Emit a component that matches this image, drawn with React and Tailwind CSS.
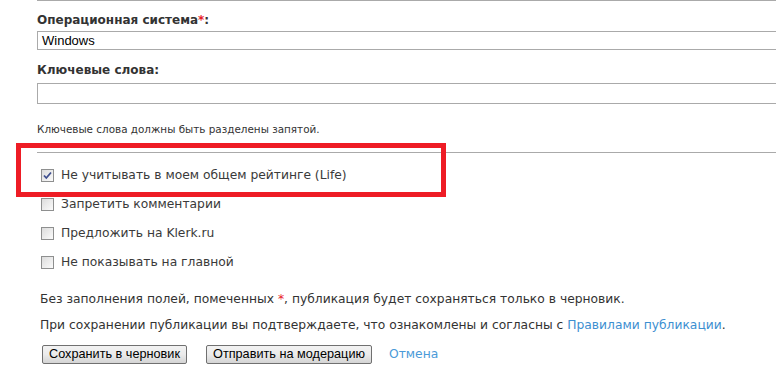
const Box = ({ checked }) => (
  <span className="w-[13px] h-[13px] border border-[#8e8f8f] bg-gradient-to-br from-[#dcdcdc] to-[#fbfbfb] flex items-center justify-center shrink-0">
    {checked && (
      <svg viewBox="0 0 11 11" className="w-[11px] h-[11px]">
        <path d="M2 5.5 L4.3 8 L9 2.5" fill="none" stroke="#3f4f8f" strokeWidth="1.8" />
      </svg>
    )}
  </span>
)

const Option = ({ label, checked }) => (
  <div className="h-[29px] flex items-center gap-[7px] pl-[4px]">
    <Box checked={checked} />
    <span className="text-[12.3px] text-[#3a3a3a]">{label}</span>
  </div>
)

const Btn = ({ children }) => (
  <button className="h-[19px] px-[6px] whitespace-nowrap rounded-[2px] border border-[#707070] bg-gradient-to-b from-[#f2f2f2] via-[#ebebeb] to-[#d4d4d4] text-[12.7px] leading-[17px] text-black font-['Liberation_Sans',sans-serif]">
    {children}
  </button>
)

export default function App() {
  return (
    <div className="relative w-[776px] h-[380px] overflow-hidden bg-white text-[#333] font-['DejaVu_Sans',sans-serif]">
      <div className="ml-[37px] h-px bg-[#aaa]" />
      <div className="pl-[37px]">
        <div className="mt-[11px] text-[12px] leading-[16px] font-bold">
          Операционная система<span className="text-[#e8202a]">*</span>:
        </div>
        <div className="mt-[3px] w-[800px] h-[19px] border border-[#aaa] pl-[4px] text-[13px] leading-[17px] text-black font-['Liberation_Sans',sans-serif]">
          Windows
        </div>
        <div className="mt-[12px] text-[12px] leading-[16px] font-bold">Ключевые слова:</div>
        <div className="mt-[5px] w-[800px] h-[21px] border border-[#aaa]" />
        <div className="mt-[18px] text-[10.4px] leading-[14px]">Ключевые слова должны быть разделены запятой.</div>
        <div className="mt-[16px] h-px bg-[#aaa]" />
      </div>
      <div className="pl-[37px] mt-[8px]">
        <Option label="Не учитывать в моем общем рейтинге (Life)" checked />
        <Option label="Запретить комментарии" />
        <Option label="Предложить на Klerk.ru" />
        <Option label="Не показывать на главной" />
      </div>
      <div className="pl-[40px] mt-[9px] text-[12.3px] leading-[26px] text-[#333]">
        <p>
          Без заполнения полей, помеченных <span className="text-[#e8202a]">*</span>, публикация будет сохраняться только в черновик.
        </p>
        <p>
          При сохранении публикации вы подтверждаете, что ознакомлены и согласны с{' '}
          <span className="text-[#3d8fd1]">Правилами публикации</span>.
        </p>
      </div>
      <div className="pl-[42px] mt-[7px] flex items-center">
        <Btn>Сохранить в черновик</Btn>
        <span className="w-[19px]" />
        <Btn>Отправить на модерацию</Btn>
        <span className="ml-[17px] text-[12.3px] text-[#4a9ad8]">Отмена</span>
      </div>
      <div className="absolute left-[16px] top-[143px] w-[430px] h-[54px] border-[5px] border-[#ee1c25]" />
    </div>
  )
}
